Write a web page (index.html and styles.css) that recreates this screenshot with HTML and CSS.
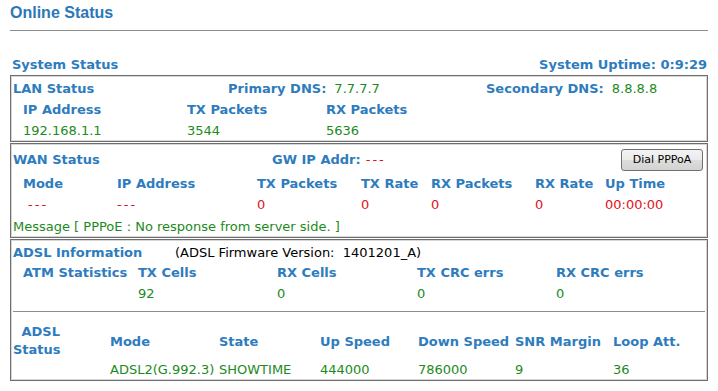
FILE: index.html
```html
<html><head><meta http-equiv="Content-Type" content="text/html; charset=UTF-8">

<title>Online Status</title>

<link rel="stylesheet" href="styles.css">

</head>

<body>

  <h3 class="title">Online Status</h3>
  <hr class="rule">

  <div class="sysbar">
    <span class="lbl">System Status</span>
    <span class="lbl">System Uptime: 0:9:29</span>
  </div>

  <!-- LAN -->
  <div class="box">
    <div class="row lan-top">
      <span class="lbl">LAN Status</span>
      <span><span class="lbl">Primary DNS:</span><span class="val gap">7.7.7.7</span></span>
      <span><span class="lbl">Secondary DNS:</span><span class="val gap">8.8.8.8</span></span>
    </div>
    <div class="row ind lan-cols">
      <span class="lbl">IP Address</span>
      <span class="lbl">TX Packets</span>
      <span class="lbl">RX Packets</span>
    </div>
    <div class="row ind lan-cols">
      <span class="val">192.168.1.1</span>
      <span class="val">3544</span>
      <span class="val">5636</span>
    </div>
  </div>

  <!-- WAN -->
  <div class="box">
    <div class="row wan-top">
      <span class="lbl">WAN Status</span>
      <span><span class="lbl">GW IP Addr:</span><span class="err none gap-s">---</span></span>
      <button class="btn">Dial PPPoA</button>
    </div>
    <div class="row ind wan-cols">
      <span class="lbl">Mode</span>
      <span class="lbl">IP Address</span>
      <span class="lbl">TX Packets</span>
      <span class="lbl">TX Rate</span>
      <span class="lbl">RX Packets</span>
      <span class="lbl">RX Rate</span>
      <span class="lbl">Up Time</span>
    </div>
    <div class="row ind wan-cols">
      <span class="err none dash">---</span>
      <span class="err none">---</span>
      <span class="err">0</span>
      <span class="err">0</span>
      <span class="err">0</span>
      <span class="err">0</span>
      <span class="err">00:00:00</span>
    </div>
    <div class="row msg">
      <span class="val">Message [ PPPoE : No response from server side. ]</span>
    </div>
  </div>

  <!-- ADSL -->
  <div class="box">
    <div class="row adsl-top">
      <span class="lbl">ADSL Information</span>
      <span>(ADSL Firmware Version:&nbsp; 1401201_A)</span>
    </div>
    <div class="row ind atm-cols">
      <span class="lbl">ATM Statistics</span>
      <span class="lbl">TX Cells</span>
      <span class="lbl">RX Cells</span>
      <span class="lbl">TX CRC errs</span>
      <span class="lbl">RX CRC errs</span>
    </div>
    <div class="row ind atm-cols">
      <span></span>
      <span class="val">92</span>
      <span class="val">0</span>
      <span class="val">0</span>
      <span class="val">0</span>
    </div>

    <div class="divider"></div>

    <div class="line-grid">
      <span class="lbl stat">ADSL<br>Status</span>
      <span></span>
      <span class="lbl">Mode</span>
      <span class="lbl">State</span>
      <span class="lbl">Up Speed</span>
      <span class="lbl">Down Speed</span>
      <span class="lbl">SNR Margin</span>
      <span class="lbl">Loop Att.</span>

      <span></span>
      <span></span>
      <span class="val">ADSL2(G.992.3)</span>
      <span class="val">SHOWTIME</span>
      <span class="val">444000</span>
      <span class="val">786000</span>
      <span class="val">9</span>
      <span class="val">36</span>
    </div>
  </div>

</body></html>
```

FILE: styles.css
```css
body
{
  margin : 0;
  padding : 3px 10px 0;
  font-family : "DejaVu Sans", Verdana, Tahoma, sans-serif;
  font-size : 13px;
  background : #fff;
  color : #000;
}

.title
{
  margin : 0;
  font-family : "Liberation Sans", Arial, sans-serif;
  font-size : 16px;
  font-weight : bold;
  line-height : 20px;
  color : #2b78b8;
}

.rule
{
  margin : 7px 0 0;
  border : 0;
  border-top : 1px solid #8c8c8c;
  height : 0;
}

.sysbar
{
  display : flex;
  justify-content : space-between;
  margin-top : 23px;
  padding : 0 1px 0 2px;
  height : 21px;
  line-height : 21px;
}

.lbl
{
  color : #2e7cbd;
  font-weight : bold;
}
.val
{
  color : #1c8a1c;
}
.err
{
  color : #e3121b;
}
.err.none
{
  /* "---" stands wider in the original font */
  letter-spacing : 2px;
}
.gap
{
  margin-left : 8px;
}
.gap-s
{
  margin-left : 5px;
}
.dash
{
  padding-left : 5px;
}

/* boxes */
.box
{
  border : 1px solid #6e6e6e;
  box-shadow : inset 0 0 0 1px #d6d6d6;
  padding : 2px 2px 0;
}
.box + .box
{
  margin-top : 1px;
}

.row
{
  display : grid;
  align-items : center;
  height : 21px;
  line-height : 21px;
  white-space : nowrap;
}
.row.ind
{
  padding-left : 10px;
}

.lan-top
{
  grid-template-columns : 215px 258px 1fr;
}
.lan-cols
{
  grid-template-columns : 164px 139px 1fr;
}

.wan-top
{
  grid-template-columns : 259px 1fr auto;
  height : 27px;
}
.wan-cols
{
  grid-template-columns : 94px 140px 104px 70px 104px 70px 1fr;
}
.msg
{
  height : 22px;
}

.btn
{
  width : 82px;
  height : 22px;
  margin-right : 2px;
  padding : 0;
  font-family : "DejaVu Sans", Tahoma, sans-serif;
  font-size : 11px;
  color : #000;
  border : 1px solid #707070;
  border-radius : 3px;
  background : linear-gradient(#f2f2f2, #ebebeb 50%, #dddddd 51%, #d2d2d2);
}

.adsl-top
{
  grid-template-columns : 162px 1fr;
  height : 20px;
}
.atm-cols
{
  grid-template-columns : 115px 139px 140px 139px 1fr;
}

.divider
{
  margin-top : 7px;
  border-top : 1px solid #8c8c8c;
}

.line-grid
{
  display : grid;
  grid-template-columns : 47px 50px 109px 101px 98px 97px 98px 1fr;
  grid-template-rows : 36px 21px;
  align-items : center;
  padding-top : 11px;
  white-space : nowrap;
}
.stat
{
  text-align : right;
  line-height : 18px;
}
```
